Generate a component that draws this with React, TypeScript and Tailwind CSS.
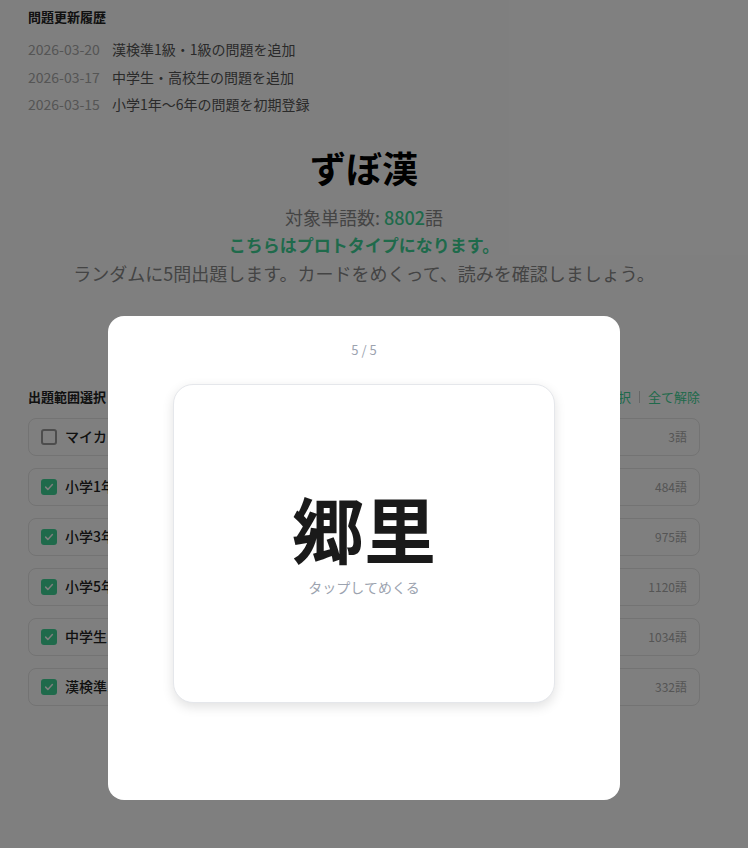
const font = { fontFamily: '"Noto Sans CJK JP", "Noto Sans", sans-serif' };

const history = [
  { date: "2026-03-20", text: "漢検準1級・1級の問題を追加" },
  { date: "2026-03-17", text: "中学生・高校生の問題を追加" },
  { date: "2026-03-15", text: "小学1年〜6年の問題を初期登録" },
];

const ranges = [
  { label: "マイカード", count: "3語", checked: false },
  { label: "小学1年・2年", count: "484語", checked: true },
  { label: "小学3年・4年", count: "975語", checked: true },
  { label: "小学5年・6年", count: "1120語", checked: true },
  { label: "中学生・高校生", count: "1034語", checked: true },
  { label: "漢検準1級・1級", count: "332語", checked: true },
];

function Check({ checked }: { checked: boolean }) {
  if (!checked) {
    return <span className="h-4 w-4 rounded-[3px] border-2 border-[#9a9a9a] bg-white" />;
  }
  return (
    <span className="flex h-4 w-4 items-center justify-center rounded-[3px] bg-[#3fd497]">
      <svg viewBox="0 0 16 16" className="h-3 w-3" fill="none">
        <path d="M3.5 8.2l3 3 6-6.4" stroke="#ffffff" strokeWidth="2" strokeLinecap="round" strokeLinejoin="round" />
      </svg>
    </span>
  );
}

export default function App() {
  return (
    <div className="relative h-[848px] overflow-hidden bg-white" style={font}>
      <div className="w-[728px] px-7 pt-[9px]">
        <h2 className="text-[13px] font-bold leading-4 text-[#222]">問題更新履歴</h2>
        <ul className="mt-[14px] flex flex-col gap-[7.5px]">
          {history.map((h) => (
            <li key={h.date} className="flex gap-3 text-[14px] leading-5">
              <span className="text-[#aaa]">{h.date}</span>
              <span className="text-[#555]">{h.text}</span>
            </li>
          ))}
        </ul>

        <div className="mt-[31px] flex flex-col items-center text-center">
          <h1 className="text-[36px] font-bold leading-[44px] text-black">ずぼ漢</h1>
          <p className="mt-[14px] text-[18px] leading-7 text-[#888]">
            対象単語数: <span className="font-medium text-[#3fd497]">8802</span>語
          </p>
          <p className="text-[17px] font-bold leading-7 text-[#3fd497]">こちらはプロトタイプになります。</p>
          <p className="text-[18px] leading-7 text-[#888]">
            ランダムに5問出題します。カードをめくって、読みを確認しましょう。
          </p>
        </div>

        <div className="mt-[100px] flex items-center justify-between">
          <h2 className="text-[13px] font-bold leading-4 text-[#222]">出題範囲選択</h2>
          <div className="flex items-center gap-2 text-[13px] text-[#3fd497]">
            <span>全て選択</span>
            <span className="h-3 w-px bg-[#ccc]" />
            <span>全て解除</span>
          </div>
        </div>

        <ul className="mt-[11px] flex flex-col gap-3">
          {ranges.map((r) => (
            <li
              key={r.label}
              className="flex h-[38px] items-center justify-between rounded-lg border border-[#e6e6e6] pl-3 pr-3"
            >
              <div className="flex items-center gap-2">
                <Check checked={r.checked} />
                <span className="text-[14px] font-medium text-[#222]">{r.label}</span>
              </div>
              <span className="text-[12px] text-[#aaa]">{r.count}</span>
            </li>
          ))}
        </ul>
      </div>

      <div className="absolute inset-0 bg-black/50">
        <div className="ml-[108px] mt-[316px] flex h-[484px] w-[512px] flex-col items-center rounded-2xl bg-white pt-[24px]">
          <p className="text-[13px] leading-5 text-[#9ca3af]">5 / 5</p>
          <div className="mt-[24px] flex h-[319px] w-[382px] flex-col items-center justify-center rounded-[20px] border border-[#e5e7eb] bg-white shadow-[0_4px_12px_rgba(0,0,0,0.12)]">
            <p className="text-[72px] font-bold leading-none text-[#1a1a1a]">郷里</p>
            <p className="mt-[14px] text-[14px] leading-5 text-[#9ca3af]">タップしてめくる</p>
          </div>
        </div>
      </div>
    </div>
  );
}
